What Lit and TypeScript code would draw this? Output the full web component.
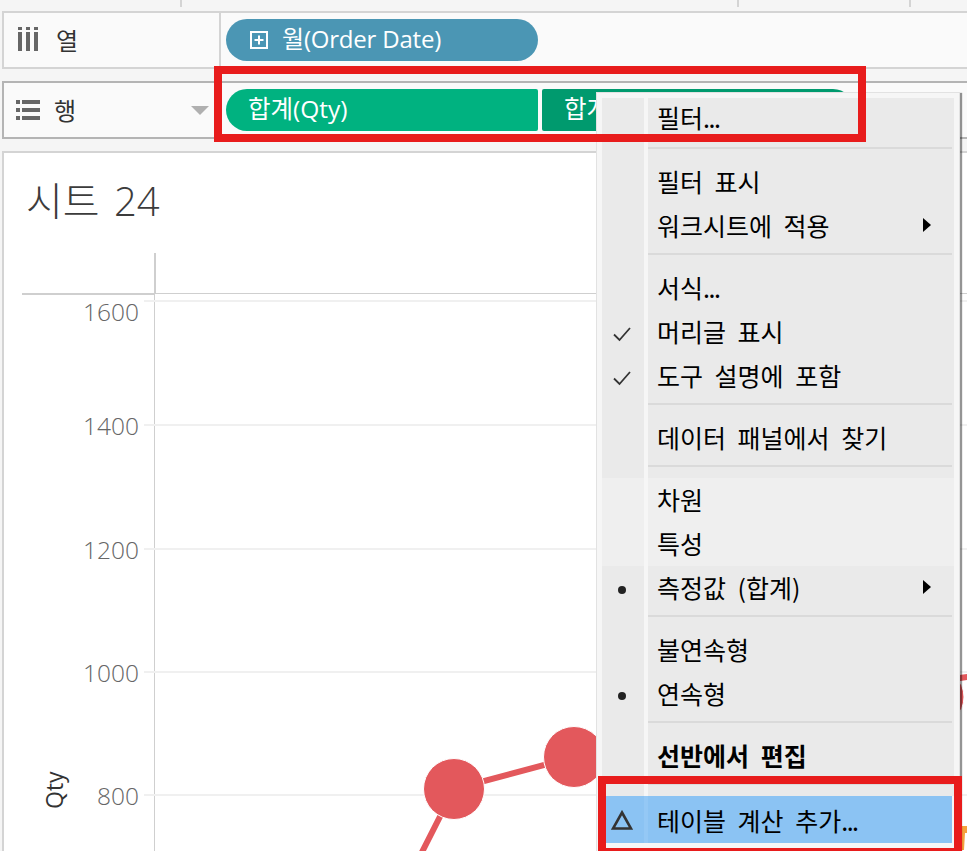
import { LitElement, html, svg, css } from "lit";
import { customElement } from "lit/decorators.js";

type Row =
  | { sep: true; wide?: boolean }
  | {
      sep?: false;
      label: string;
      mark?: "check" | "dot" | "delta";
      arrow?: boolean;
      dim?: boolean;
      bold?: boolean;
      first?: boolean;
      active?: boolean;
    };

const MENU: Row[] = [
  { label: "필터...", first: true },
  { sep: true, wide: true },
  { label: "필터 표시" },
  { label: "워크시트에 적용", arrow: true },
  { sep: true },
  { label: "서식..." },
  { label: "머리글 표시", mark: "check" },
  { label: "도구 설명에 포함", mark: "check" },
  { sep: true },
  { label: "데이터 패널에서 찾기" },
  { sep: true },
  { label: "차원", dim: true },
  { label: "특성", dim: true },
  { label: "측정값 (합계)", mark: "dot", arrow: true },
  { sep: true },
  { label: "불연속형" },
  { label: "연속형", mark: "dot" },
  { sep: true },
  { label: "선반에서 편집", bold: true },
  { sep: true },
  { label: "테이블 계산 추가...", mark: "delta", active: true },
];

const GRID = [301, 425, 549, 672, 795];
const TICKS = [
  { y: 321, t: "1600" },
  { y: 435, t: "1400" },
  { y: 559, t: "1200" },
  { y: 682, t: "1000" },
  { y: 805, t: "800" },
];

@customElement("app-root")
export class AppRoot extends LitElement {
  static styles = css`
    :host {
      display: block;
      position: relative;
      width: 967px;
      height: 851px;
      overflow: hidden;
      background: #f5f5f5;
      font-family: "Open Sans", "Noto Sans CJK KR", sans-serif;
      color: #1a1a1a;
    }
    .ticks {
      height: 11px;
      display: flex;
    }
    .tick {
      width: 2px;
      height: 7px;
      background: #d4d4d4;
    }
    .t1 { margin-left: 180px; }
    .t2 { margin-left: 555px; }
    .t3 { margin-left: 170px; }
    .shelf {
      display: flex;
      height: 58px;
      box-sizing: border-box;
      margin-left: 2px;
      width: 975px;
      border: 2px solid #d4d4d4;
      background: #fafafa;
    }
    .shelf.rows {
      margin-top: 12px;
      border-color: #b4b4b4;
    }
    .head {
      width: 215px;
      flex: none;
      box-sizing: border-box;
      display: flex;
      align-items: center;
      position: relative;
      font-family: "Noto Sans CJK KR", sans-serif;
      font-size: 24px;
      color: #333;
    }
    .head span { padding-bottom: 2px; }
    .cols .head { border-right: 2px solid #d4d4d4; width: 217px; }
    .head svg { flex: none; display: block; }
    .iii { margin: -2px 17px 0 14px; }
    .lst { margin-left: 12px; margin-right: 14px; }
    .caret {
      margin-left: auto;
      margin-right: 10px;
    }
    .pills {
      display: flex;
      gap: 4px;
      align-items: center;
      padding-left: 5px;
    }
    .rows .pills { padding-left: 7px; }
    .pill {
      height: 42px;
      box-sizing: border-box;
      width: 312px;
      display: flex;
      align-items: center;
      color: #fff;
      font-size: 24.5px;
      padding-left: 22px;
      padding-bottom: 5px;
      white-space: nowrap;
    }
    .blue {
      background: #4b96b4;
      border-radius: 21px;
      gap: 14px;
      padding-left: 24px;
      font-size: 24px;
      letter-spacing: -0.2px;
    }
    .blue svg { margin-top: 5px; }
    .green {
      background: #00b280;
      border-radius: 21px 2px 2px 21px;
    }
    .dark {
      background: #009a6e;
      border-radius: 2px 21px 21px 2px;
    }
    .sheet {
      margin: 12px 0 0 2px;
      height: 700px;
      box-sizing: border-box;
      border-left: 2px solid #d4d4d4;
      border-top: 2px solid #d4d4d4;
      background: #fff;
      overflow: hidden;
    }
    .title {
      height: 100px;
      box-sizing: border-box;
      padding: 19px 0 0 22px;
      font-size: 40px;
      line-height: 58px;
      font-weight: 300;
      color: #3c3c3c;
      font-family: "Open Sans", "Noto Sans CJK KR", sans-serif;
      word-spacing: 4px;
    }
    .chart {
      display: block;
      width: 963px;
      height: 598px;
    }
    .axis { stroke: #cfcfcf; fill: none; }
    .grid { stroke: #f0f0f0; stroke-width: 2; }
    .tk {
      font-family: "Open Sans", sans-serif;
      font-weight: 300;
      font-size: 24.5px;
      fill: #666;
      text-anchor: end;
    }
    .qty {
      font-family: "Open Sans", sans-serif;
      font-size: 23px;
      fill: #333;
    }
    .mark { fill: #e3585c; stroke: #fff; stroke-width: 1; }
    .link { stroke: #e3585c; stroke-width: 6; fill: none; }
    .orange { fill: #f5a13c; }

    .menu {
      position: absolute;
      left: 596px;
      top: 92px;
      width: 364px;
      height: 770px;
      box-sizing: border-box;
      padding: 5px 5px 0 5px;
      background: #f6f6f6;
      border: 1px solid #e2e2e2;
      box-shadow: 3px 0 1px -1px rgba(0, 0, 0, 0.42);
      font-family: "Noto Sans CJK KR", sans-serif;
      font-size: 25px;
      color: #000;
    }
    .row {
      display: grid;
      grid-template-columns: 42px 4px 306px;
      height: 44px;
    }
    .row.first { height: 40px; }
    .row.sepr { height: 18px; }
    .row.sepr.wide { height: 22px; }
    .row.active { height: 47px; width: 350px; background: #8bc3f3; }
    .gut, .body { background: #eaeaea; }
    .dim .gut, .dim .body { background: #efefef; }
    .active .gut, .active .body { background: transparent; }
    .active .mid { background: #94c8f5; }
    .gut {
      display: flex;
      align-items: center;
      justify-content: center;
      box-sizing: border-box;
      padding: 3px 3px 0 0;
    }
    .active .gut { padding-top: 0; }
    .body {
      display: flex;
      align-items: center;
      box-sizing: border-box;
      padding: 0 23px 2px 9px;
      word-spacing: 6px;
      white-space: nowrap;
    }
    .active .body { padding-top: 3px; }
    .bold { font-weight: 700; }
    .arrow { margin-left: auto; display: block; }
    .dots { letter-spacing: -1.5px; }
    .line {
      height: 2px;
      background: #dadada;
      margin: 5px 2px 0 0;
    }
    .wide .line { margin-top: 9px; }
    .sepr .body { display: block; padding: 0; }
    .dot {
      width: 8px;
      height: 8px;
      border-radius: 50%;
      background: #222;
    }
    .box {
      position: absolute;
      box-sizing: border-box;
      border: 8px solid #e81c1c;
      pointer-events: none;
    }
    .box-a { left: 214px; top: 66px; width: 652px; height: 76px; }
    .box-b { left: 598px; top: 776px; width: 364px; height: 80px; }
  `;

  private mark(r: { mark?: string }) {
    if (r.mark === "check")
      return html`<svg width="20" height="16" viewBox="0 0 20 16"><path d="M2 8.5 L7.5 14 L18 2" fill="none" stroke="#333" stroke-width="1.8"/></svg>`;
    if (r.mark === "dot") return html`<div class="dot"></div>`;
    if (r.mark === "delta")
      return html`<svg width="22" height="20" viewBox="0 0 22 20"><path d="M11 2.5 L20 18.5 H2 Z" fill="none" stroke="#333" stroke-width="2.6"/></svg>`;
    return "";
  }

  private label(text: string) {
    if (text.endsWith("..."))
      return html`<span>${text.slice(0, -3)}<span class="dots">...</span></span>`;
    return html`<span>${text}</span>`;
  }

  private chart() {
    return svg`
      <path class="axis" stroke-width="2" d="M155 253 V293"/>
      <path class="axis" stroke-width="2" d="M22 294 H154"/>
      <path class="axis" stroke-width="1" d="M154 293.5 H967 M154.5 293 V851"/>
      ${GRID.map((y) => svg`<line class="grid" x1="144" x2="967" y1=${y} y2=${y}></line>`)}
      ${TICKS.map((t) => svg`<text class="tk" x="139" y=${t.y}>${t.t}</text>`)}
      <text class="qty" transform="translate(63 809) rotate(-90)">Qty</text>
      <polyline class="link" points="418,860 454,789 574,757 640,740"></polyline>
      <polyline class="link" points="930,690 960,678 975,676"></polyline>
      <circle class="mark" cx="454" cy="789" r="30.5"></circle>
      <circle class="mark" cx="574" cy="757" r="30.5"></circle>
      <circle class="mark" cx="934" cy="697" r="30"></circle>
      <path class="orange" d="M962 826 H967 V833 H965 L964 850 H962 Z"></path>
    `;
  }

  render() {
    return html`
      <div class="ticks">
        <div class="tick t1"></div>
        <div class="tick t2"></div>
        <div class="tick t3"></div>
      </div>
      <div class="shelf cols">
        <div class="head">
          <svg class="iii" width="21" height="24" viewBox="0 0 21 24" fill="#666">
            <rect x="0" y="0" width="4" height="3"/><rect x="0" y="5" width="4" height="19"/>
            <rect x="8" y="0" width="4" height="3"/><rect x="8" y="5" width="4" height="19"/>
            <rect x="16" y="0" width="4" height="3"/><rect x="16" y="5" width="4" height="19"/>
          </svg>
          <span>열</span>
        </div>
        <div class="pills">
          <div class="pill blue">
            <svg width="18" height="18" viewBox="0 0 18 18" fill="none" stroke="#fff" stroke-width="2">
              <rect x="1" y="1" width="16" height="16"/><path d="M4.5 9 H13.5 M9 4.5 V13.5"/>
            </svg>
            <span>월(Order Date)</span>
          </div>
        </div>
      </div>
      <div class="shelf rows">
        <div class="head">
          <svg class="lst" width="24" height="21" viewBox="0 0 24 21" fill="#666">
            <rect x="0" y="0" width="4" height="4"/><rect x="6" y="0" width="18" height="4"/>
            <rect x="0" y="8" width="4" height="4"/><rect x="6" y="8" width="18" height="4"/>
            <rect x="0" y="16" width="4" height="4"/><rect x="6" y="16" width="18" height="4"/>
          </svg>
          <span>행</span>
          <svg class="caret" width="18" height="9" viewBox="0 0 18 9"><path d="M0 0 H18 L9 9 Z" fill="#b0b0b0"/></svg>
        </div>
        <div class="pills">
          <div class="pill green">합계(Qty)</div>
          <div class="pill dark">합계(Qty)</div>
        </div>
      </div>
      <div class="sheet">
        <div class="title">시트 24</div>
        <svg class="chart" viewBox="4 253 963 598">${this.chart()}</svg>
      </div>
      <div class="menu">
        ${MENU.map((r) =>
          r.sep
            ? html`<div class="row sepr ${r.wide ? "wide" : ""}">
                <div class="gut"></div><div class="mid"></div>
                <div class="body"><div class="line"></div></div>
              </div>`
            : html`<div class="row ${r.first ? "first" : ""} ${r.dim ? "dim" : ""} ${r.active ? "active" : ""}">
                <div class="gut">${this.mark(r)}</div><div class="mid"></div>
                <div class="body ${r.bold ? "bold" : ""}">
                  ${this.label(r.label)}
                  ${r.arrow
                    ? html`<svg class="arrow" width="8" height="14" viewBox="0 0 8 14"><path d="M0 0 L8 7 L0 14 Z" fill="#000"/></svg>`
                    : ""}
                </div>
              </div>`
        )}
      </div>
      <div class="box box-a"></div>
      <div class="box box-b"></div>
    `;
  }
}
